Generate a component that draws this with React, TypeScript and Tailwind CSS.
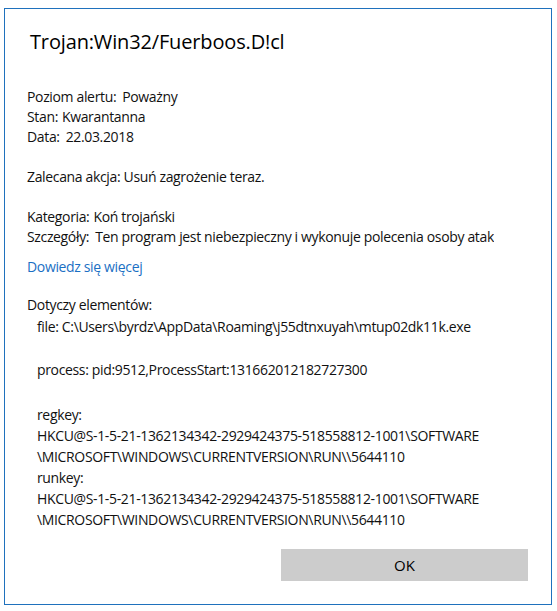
const font = { fontFamily: '"Open Sans", "Noto Sans", sans-serif' };

function Line({ label, value, wide }: { label: string; value: string; wide?: boolean }) {
  return (
    <div className="h-[20px] leading-[20px] whitespace-nowrap">
      {label}
      <span className={wide ? "ml-[6px]" : "ml-[4px]"}>{value}</span>
    </div>
  );
}

export default function App() {
  return (
    <div className="w-[557px] h-[611px] bg-white pl-[4px] pt-[8px]" style={font}>
      <div className="w-[548px] h-[597px] border border-[#1f71bd] bg-white flex flex-col pt-[19px] pl-[22px] pr-[23px] text-[14px] tracking-[-0.35px] text-[#111]">
        <h1 className="text-[20px] leading-[28px] pl-[3px] tracking-[-0.15px] text-black">Trojan:Win32/Fuerboos.D!cl</h1>

        <div className="mt-[31px]">
          <Line label="Poziom alertu:" value="Poważny" wide />
          <Line label="Stan:" value="Kwarantanna" />
          <Line label="Data:" value="22.03.2018" wide />
        </div>

        <div className="mt-[20px] h-[20px] leading-[20px]">Zalecana akcja: Usuń zagrożenie teraz.</div>

        <div className="mt-[20px]">
          <Line label="Kategoria:" value="Koń trojański" />
          <div className="w-[467px] h-[20px] leading-[20px] overflow-hidden whitespace-nowrap">
            Szczegóły:
            <span className="ml-[6px]">Ten program jest niebezpieczny i wykonuje polecenia osoby atakującej.</span>
          </div>
        </div>

        <a className="mt-[10px] h-[20px] leading-[20px] text-[#1a6fc4] w-fit cursor-pointer">Dowiedz się więcej</a>

        <div className="mt-[18px] h-[20px] leading-[20px]">Dotyczy elementów:</div>
        <div className="mt-[2px] pl-[10px] h-[20px] leading-[20px] whitespace-nowrap">
          file: C:\Users\byrdz\AppData\Roaming\j55dtnxuyah\mtup02dk11k.exe
        </div>
        <div className="mt-[23px] pl-[10px] h-[20px] leading-[20px] whitespace-nowrap">
          process: pid:9512,ProcessStart:131662012182727300
        </div>

        <div className="mt-[24px] pl-[10px] leading-[21px] whitespace-nowrap">
          <div>regkey:</div>
          <div>HKCU@S-1-5-21-1362134342-2929424375-518558812-1001\SOFTWARE</div>
          <div>\MICROSOFT\WINDOWS\CURRENTVERSION\RUN\\5644110</div>
          <div>runkey:</div>
          <div>HKCU@S-1-5-21-1362134342-2929424375-518558812-1001\SOFTWARE</div>
          <div>\MICROSOFT\WINDOWS\CURRENTVERSION\RUN\\5644110</div>
        </div>

        <div className="mt-auto mb-[23px] flex justify-end">
          <button className="w-[247px] h-[32px] bg-[#cccccc] text-[15px] text-black tracking-normal">OK</button>
        </div>
      </div>
    </div>
  );
}
